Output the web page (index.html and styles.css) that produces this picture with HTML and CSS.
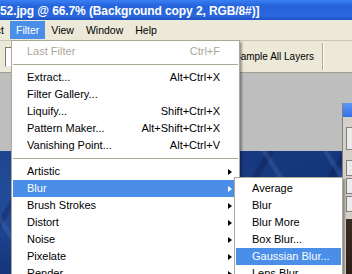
FILE: index.html
```html
<!doctype html>
<html>
<head>
<meta charset="utf-8">
<link rel="stylesheet" href="styles.css">
</head>
<body>
<div class="app">
    <div class="titlebar"><span class="title">52.jpg @ 66.7% (Background copy 2, RGB/8#)]</span></div>
    <div class="menubar">
        <span class="mb-item first">Select</span>
        <span class="mb-item active">Filter</span>
        <span class="mb-item">View</span>
        <span class="mb-item">Window</span>
        <span class="mb-item">Help</span>
    </div>
    <div class="toolbar">
        <div class="combo"></div>
        <label class="check"><span class="box"></span>Sample All Layers</label>
        <span class="tb-sep"></span>
    </div>
    <div class="workspace">
        <div class="document"></div>
    </div>
</div>

<div class="palette">
    <div class="p-title"></div>
    <div class="p-body">
        <div class="p-box tall"></div>
        <div class="p-box gap"></div>
        <div class="p-box"></div>
        <div class="p-box"></div>
    </div>
    <div class="p-thumb"></div>
</div>

<ul class="menu main">
    <li class="dis">Last Filter<span class="key">Ctrl+F</span></li>
    <li class="sep"></li>
    <li>Extract...<span class="key">Alt+Ctrl+X</span></li>
    <li>Filter Gallery...</li>
    <li>Liquify...<span class="key">Shift+Ctrl+X</span></li>
    <li>Pattern Maker...<span class="key">Alt+Shift+Ctrl+X</span></li>
    <li>Vanishing Point...<span class="key">Alt+Ctrl+V</span></li>
    <li class="sep"></li>
    <li class="has-sub">Artistic<span class="arrow"></span></li>
    <li class="has-sub hl">Blur<span class="arrow"></span></li>
    <li class="has-sub">Brush Strokes<span class="arrow"></span></li>
    <li class="has-sub">Distort<span class="arrow"></span></li>
    <li class="has-sub">Noise<span class="arrow"></span></li>
    <li class="has-sub">Pixelate<span class="arrow"></span></li>
    <li class="has-sub">Render<span class="arrow"></span></li>
</ul>

<ul class="menu sub">
    <li>Average</li>
    <li>Blur</li>
    <li>Blur More</li>
    <li>Box Blur...</li>
    <li class="hl">Gaussian Blur...</li>
    <li>Lens Blur...</li>
</ul>
</body>
</html>
```

FILE: styles.css
```css
html, body { margin: 0; padding: 0; }
body {
    width: 352px;
    height: 274px;
    overflow: hidden;
    position: relative;
    font-family: "Liberation Sans", Arial, sans-serif;
    background: #bebebe;
}

.app {
    display: flex;
    flex-direction: column;
    height: 274px;
}

/* window title */
.titlebar {
    height: 20px;
    flex: none;
    background: linear-gradient(#3a80f3, #2563dc 30%, #2a66dd 80%, #1c52c4);
    color: #fff;
    font-weight: bold;
    font-size: 12px;
    letter-spacing: -0.1px;
    line-height: 16px;
    padding-top: 3px;
    box-sizing: border-box;
    white-space: nowrap;
    overflow: hidden;
}

/* menu bar */
.menubar {
    height: 20px;
    flex: none;
    box-sizing: border-box;
    padding-top: 1px;
    background: #ece9d8;
    display: flex;
    font-size: 10.5px;
    white-space: nowrap;
}
.mb-item {
    height: 18px;
    line-height: 18px;
    padding: 0 6px;
    color: #000;
}
.mb-item.first { margin-left: -31.2px; }
.mb-item.active { background: #4a8ee8; color: #fff; }

/* options bar */
.toolbar {
    height: 33px;
    flex: none;
    box-sizing: border-box;
    background: #ece9d8;
    border-top: 1px solid #c9c6b6;
    border-bottom: 1px solid #a09d90;
    display: flex;
    align-items: center;
    padding-left: 5px;
    font-size: 10px;
    white-space: nowrap;
}
.combo {
    width: 40px;
    height: 20px;
    box-sizing: border-box;
    background: #fff;
    border: 1px solid;
    border-color: #7a7a7a #e8e8e8 #e8e8e8 #7a7a7a;
}
.check {
    display: flex;
    align-items: center;
    margin-left: 172px;
    color: #000;
}
.check .box {
    width: 13px;
    height: 13px;
    box-sizing: border-box;
    border: 1px solid #1c5180;
    background: #fff;
    margin-right: 4px;
}
.tb-sep {
    width: 0;
    height: 27px;
    margin-left: 8px;
    border-left: 1px solid #aca899;
    border-right: 1px solid #fff;
}

/* workspace + image */
.workspace {
    flex: 1;
    display: flex;
    flex-direction: column;
    padding-top: 78px;
    background: #bebebe;
}
.document {
    flex: 1;
    background:
        repeating-linear-gradient(58deg, rgba(0,0,0,0) 0 26px, rgba(100,140,215,.22) 28px 30px, rgba(0,0,0,0) 33px 52px),
        repeating-linear-gradient(122deg, rgba(0,0,0,0) 0 34px, rgba(8,20,60,.3) 36px 40px, rgba(0,0,0,0) 42px 64px),
        radial-gradient(ellipse at 20% 40%, #24509e, rgba(36,80,158,0) 60%),
        linear-gradient(160deg, #1d4390, #15357a 55%, #1a3d88);
}

/* floating palette at the right edge */
.palette {
    position: absolute;
    left: 342px;
    top: 103px;
    width: 30px;
    height: 171px;
    display: flex;
    flex-direction: column;
    background: #d4d0c8;
    border-left: 1px solid #808080;
}
.p-title {
    height: 14px;
    background: linear-gradient(#5b97f5, #3471e6);
}
.p-body {
    padding: 10px 0 0 3px;
    display: flex;
    flex-direction: column;
}
.p-box {
    height: 16px;
    box-sizing: border-box;
    border: 1px solid #808080;
    border-right: none;
    background: #ebebeb;
    margin-bottom: 2px;
}
.p-box.tall { height: 23px; margin-bottom: 10px; }
.p-thumb {
    flex: 1;
    margin-top: 5px;
    margin-left: 2px;
    border-left: 1px solid #e0e0e0;
    background: linear-gradient(#3d2c22, #2c1f18);
}

/* drop-down menus */
.menu {
    position: absolute;
    margin: 0;
    padding: 2px 1px;
    list-style: none;
    background: #fff;
    border: 1px solid #aca899;
    box-shadow: 2px 2px 2px rgba(0,0,0,.35);
    font-size: 11px;
    color: #000;
    white-space: nowrap;
}
.menu.main { left: 11px; top: 40px; width: 225px; }
.menu.sub { left: 234px; top: 177px; width: 105px; }

.menu li {
    display: flex;
    height: 17px;
    line-height: 17px;
    padding: 0 18px 0 14px;
}
.menu.sub li { padding-left: 16px; }
.menu li.sep {
    height: 0;
    padding: 0;
    margin: 4px 0;
    border-top: 1px solid #aca899;
}
.menu li.dis { color: #aca899; }
.menu li.hl { background: #4a8ee8; color: #fff; }
.menu .key { margin-left: auto; }
.menu .arrow {
    margin-left: auto;
    margin-right: -12px;
    align-self: center;
    width: 0;
    height: 0;
    border-left: 4px solid #000;
    border-top: 3.5px solid transparent;
    border-bottom: 3.5px solid transparent;
}
.menu li.hl .arrow { border-left-color: #fff; }
```
